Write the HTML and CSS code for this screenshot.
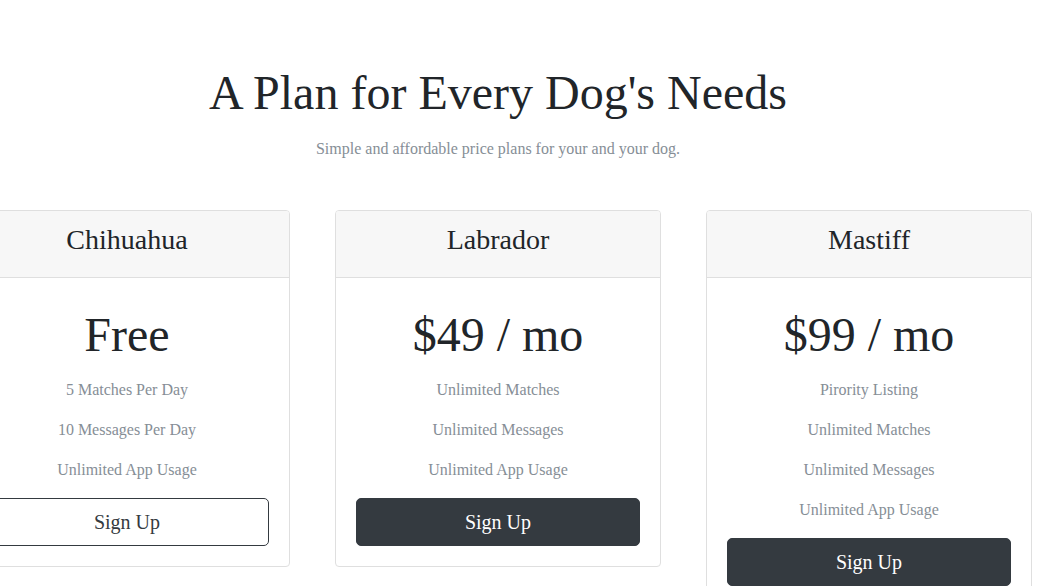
FILE: index.html
```html
<!DOCTYPE html>
<html lang="en">
<head>
<meta charset="utf-8">
<title>Pricing</title>
<link rel="stylesheet" href="styles.css">
</head>
<body>
<header class="pricing-header">
  <h1 class="title">A Plan for Every Dog's Needs</h1>
  <p class="lead">Simple and affordable price plans for your and your dog.</p>
</header>
<main class="deck">
  <section class="card">
    <div class="card-header"><h4 class="plan">Chihuahua</h4></div>
    <div class="card-body">
      <h2 class="price">Free</h2>
      <ul class="features">
        <li>5 Matches Per Day</li>
        <li>10 Messages Per Day</li>
        <li>Unlimited App Usage</li>
      </ul>
      <button class="btn btn-outline" type="button">Sign Up</button>
    </div>
  </section>
  <section class="card">
    <div class="card-header"><h4 class="plan">Labrador</h4></div>
    <div class="card-body">
      <h2 class="price">$49 / mo</h2>
      <ul class="features">
        <li>Unlimited Matches</li>
        <li>Unlimited Messages</li>
        <li>Unlimited App Usage</li>
      </ul>
      <button class="btn btn-dark" type="button">Sign Up</button>
    </div>
  </section>
  <section class="card">
    <div class="card-header"><h4 class="plan">Mastiff</h4></div>
    <div class="card-body">
      <h2 class="price">$99 / mo</h2>
      <ul class="features">
        <li>Pirority Listing</li>
        <li>Unlimited Matches</li>
        <li>Unlimited Messages</li>
        <li>Unlimited App Usage</li>
      </ul>
      <button class="btn btn-dark" type="button">Sign Up</button>
    </div>
  </section>
</main>
</body>
</html>
```

FILE: styles.css
```css
* { box-sizing: border-box; }
html, body { margin: 0; padding: 0; }
body {
  font-family: "Liberation Serif", "Times New Roman", serif;
  color: #212529;
  background: #fff;
  font-size: 16px;
  line-height: 1.5;
  overflow: hidden;
}
.pricing-header {
  text-align: center;
  width: 996px;
  padding-top: 64px;
}
.title {
  margin: 0 0 15px;
  font-size: 48px;
  font-weight: 400;
  line-height: 1.2;
}
.lead {
  margin: 0 0 49px;
  color: #868e96;
  font-size: 16px;
}
.deck {
  display: flex;
  gap: 45px;
  margin-left: -36px;
  align-items: flex-start;
}
.card {
  flex: 0 0 326px;
  border: 1px solid #dfdfdf;
  border-radius: 4px;
  text-align: center;
  overflow: hidden;
}
.card-header {
  background: #f7f7f7;
  border-bottom: 1px solid #dfdfdf;
  padding: 12px 20px 13px;
}
.plan {
  margin: 0 0 8px;
  font-size: 28px;
  font-weight: 400;
  line-height: 1.2;
}
.card-body {
  padding: 20px;
}
.price {
  margin: 8px 0 14px;
  font-size: 48px;
  font-weight: 400;
  line-height: 1.2;
}
.features {
  list-style: none;
  margin: 0;
  padding: 0;
  color: #868e96;
}
.features li {
  margin-bottom: 16px;
}
.btn {
  display: block;
  width: 100%;
  font-family: inherit;
  font-size: 20px;
  line-height: 1.5;
  padding: 8px 16px;
  border-radius: 5px;
  border: 1px solid #343a40;
  cursor: pointer;
}
.btn-outline {
  background: #fff;
  color: #343a40;
}
.btn-dark {
  background: #343a40;
  color: #fff;
}
```
